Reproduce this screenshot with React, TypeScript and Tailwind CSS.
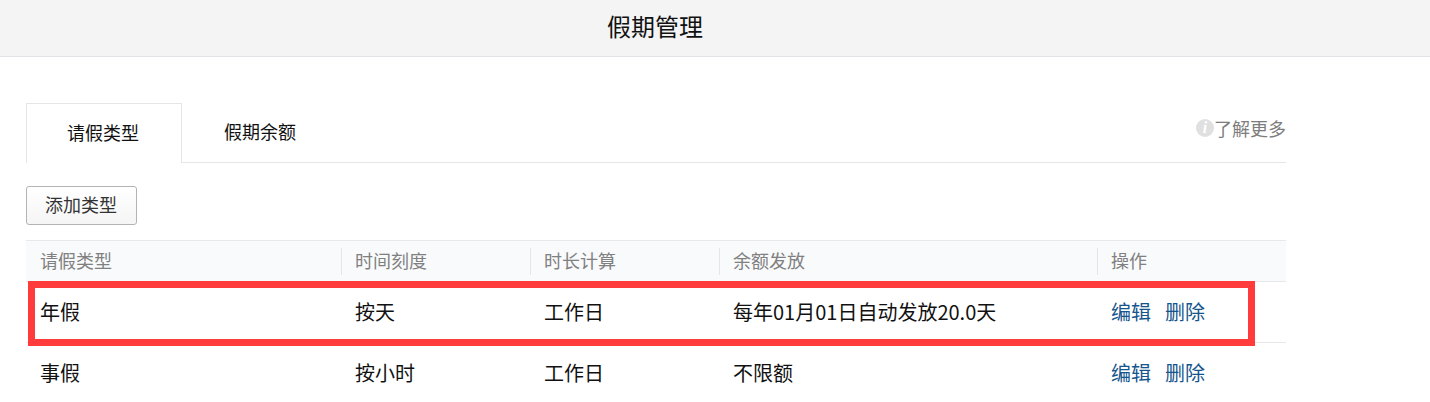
const rows = [
  { name: "年假", unit: "按天", calc: "工作日", grant: "每年01月01日自动发放20.0天" },
  { name: "事假", unit: "按小时", calc: "工作日", grant: "不限额" },
];

const cols = "grid grid-cols-[315px_189px_189px_378px_189px]";

function HeadCell({ label, first }: { label: string; first?: boolean }) {
  return (
    <div className="flex h-full items-center">
      {!first && <span className="h-[27px] w-px bg-[#e4e6ea]" />}
      <span className={first ? "pb-[2px] pl-[14px]" : "pb-[2px] pl-[13px]"}>{label}</span>
    </div>
  );
}

export default function App() {
  return (
    <div className="relative h-[402px] overflow-hidden bg-white font-['Noto_Sans_CJK_SC','Noto_Sans',sans-serif] text-[18px] text-[#111]">
      {/* Title bar */}
      <div className="flex h-[57px] items-center justify-center border-b border-[#e2e3e7] bg-[#f4f4f4] pr-[120px] pb-[5px] text-[24px]">
        假期管理
      </div>

      <div className="ml-[26px] w-[1260px] pt-[46px]">
        {/* Tabs */}
        <div className="flex h-[60px] border-b border-[#e6e6e6]">
          <div className="mb-[-1px] flex w-[156px] items-center justify-center border border-b-0 border-[#e6e6e6] bg-white pr-[2px] pb-[2px]">
            请假类型
          </div>
          <div className="flex w-[156px] items-center justify-center pb-[2px]">假期余额</div>
          <div className="ml-auto flex h-[50px] items-center text-[#7d7d7d]">
            <span className="flex h-[18px] w-[18px] items-center justify-center rounded-full bg-[#e0e0e0] font-['Liberation_Serif',serif] text-[16px] font-bold italic leading-none text-white">
              i
            </span>
            了解更多
          </div>
        </div>

        {/* Add button */}
        <button className="mt-[23px] flex h-[39px] w-[111px] items-center justify-center rounded-[3px] border border-[#b4b4b4] bg-gradient-to-b from-white to-[#f5f5f5] pr-[1px] pb-[2px] text-[#333]">
          添加类型
        </button>

        {/* Table */}
        <div className="mt-[15px]">
          <div className={`${cols} h-[42px] border-y border-[#e6e8ec] bg-[#f9fafc] text-[#808080]`}>
            <HeadCell label="请假类型" first />
            <HeadCell label="时间刻度" />
            <HeadCell label="时长计算" />
            <HeadCell label="余额发放" />
            <HeadCell label="操作" />
          </div>
          {rows.map((row) => (
            <div key={row.name} className={`${cols} h-[61px] items-center border-b border-[#e6e8ec] text-[20px]`}>
              <span className="pl-[14px]">{row.name}</span>
              <span className="pl-[14px]">{row.unit}</span>
              <span className="pl-[14px]">{row.calc}</span>
              <span className="pl-[14px]">{row.grant}</span>
              <span className="flex gap-[14px] pl-[14px] text-[#15558c]">
                <a>编辑</a>
                <a>删除</a>
              </span>
            </div>
          ))}
        </div>
      </div>

      {/* Red annotation box drawn over the first row */}
      <div className="absolute left-[28px] top-[281px] h-[65px] w-[1227px] border-[7px] border-[#ff3b3b]" />
    </div>
  );
}
